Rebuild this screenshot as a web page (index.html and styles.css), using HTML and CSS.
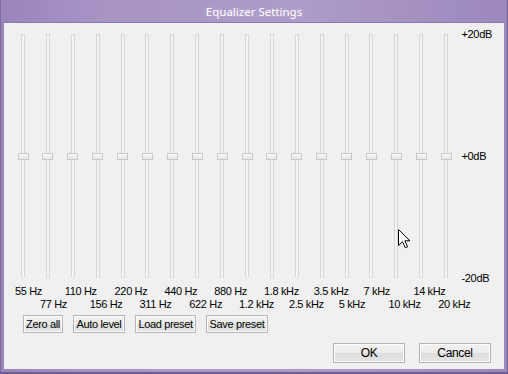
FILE: index.html
```html
<!DOCTYPE html>
<html lang="en">
  <head>
    <meta charset="UTF-8" />
    <title>Equalizer Settings</title>
    <link rel="stylesheet" href="styles.css">
  </head>
  <body>
    <div class="window">
      <div class="titlebar">Equalizer Settings</div>
      <div class="client">
        <div class="eq">
          <div class="bands">
            <div class="band"><span class="track"></span><span class="thumb"></span></div>
            <div class="band"><span class="track"></span><span class="thumb"></span></div>
            <div class="band"><span class="track"></span><span class="thumb"></span></div>
            <div class="band"><span class="track"></span><span class="thumb"></span></div>
            <div class="band"><span class="track"></span><span class="thumb"></span></div>
            <div class="band"><span class="track"></span><span class="thumb"></span></div>
            <div class="band"><span class="track"></span><span class="thumb"></span></div>
            <div class="band"><span class="track"></span><span class="thumb"></span></div>
            <div class="band"><span class="track"></span><span class="thumb"></span></div>
            <div class="band"><span class="track"></span><span class="thumb"></span></div>
            <div class="band"><span class="track"></span><span class="thumb"></span></div>
            <div class="band"><span class="track"></span><span class="thumb"></span></div>
            <div class="band"><span class="track"></span><span class="thumb"></span></div>
            <div class="band"><span class="track"></span><span class="thumb"></span></div>
            <div class="band"><span class="track"></span><span class="thumb"></span></div>
            <div class="band"><span class="track"></span><span class="thumb"></span></div>
            <div class="band"><span class="track"></span><span class="thumb"></span></div>
            <div class="band"><span class="track"></span><span class="thumb"></span></div>
          </div>
          <div class="db">
            <span>+20dB</span>
            <span>+0dB</span>
            <span>-20dB</span>
          </div>
        </div>
        <!-- labels alternate between two rows so they don't overlap -->
        <div class="freqs">
          <div class="freq-row">
            <span>55 Hz</span><span>110 Hz</span><span>220 Hz</span>
            <span>440 Hz</span><span>880 Hz</span><span>1.8 kHz</span>
            <span>3.5 kHz</span><span>7 kHz</span><span>14 kHz</span>
          </div>
          <div class="freq-row shifted">
            <span>77 Hz</span><span>156 Hz</span><span>311 Hz</span>
            <span>622 Hz</span><span>1.2 kHz</span><span>2.5 kHz</span>
            <span>5 kHz</span><span>10 kHz</span><span>20 kHz</span>
          </div>
        </div>
        <div class="presets">
          <button class="btn zero">Zero all</button>
          <button class="btn auto">Auto level</button>
          <button class="btn load">Load preset</button>
          <button class="btn save">Save preset</button>
        </div>
        <div class="actions">
          <button class="btn dlg">OK</button>
          <button class="btn dlg">Cancel</button>
        </div>
        <svg class="cursor" width="13" height="20" viewBox="0 0 13 20">
          <path d="M0.5 0.5 L0.5 16.5 L4.5 12.7 L7.3 18.8 L9.6 17.8 L6.9 11.8 L12 11.8 Z" fill="#fff" stroke="#000" stroke-width="1" stroke-linejoin="miter" />
        </svg>
      </div>
    </div>
  </body>
</html>
```

FILE: styles.css
```css
body {
  margin: 0;
  font-family: "Liberation Sans", Arial, sans-serif;
  background: #fff;
}
.window {
  width: 508px;
  height: 374px;
  box-sizing: border-box;
  padding: 0 4px 5px 4px;
  background: linear-gradient(90deg, #9a85ba 0%, #a794c5 20%, #ad9bca 60%, #9c88bb 100%);
  box-shadow: inset 0 -2px 0 #6d5c8f, inset 1px 0 0 #7d6aa0, inset -1px 0 0 #6f5e92;
}
.titlebar {
  height: 22px;
  line-height: 23px;
  text-align: center;
  color: #fff;
  font-family: "Noto Sans", sans-serif;
  font-size: 11.5px;
  text-shadow: 0 0 6px rgba(255, 255, 255, 0.35);
}
.client {
  position: relative;
  height: 347px;
  box-sizing: border-box;
  background: #f0f0f0;
  padding-top: 5px;
  font-size: 11px;
  letter-spacing: -0.35px;
  color: #000;
  border-top: 1px solid #8c79ad;
}
.eq {
  display: flex;
  height: 257px;
  padding-left: 6.5px;
}
.bands {
  display: flex;
  margin-top: 6px;
  height: 244px;
}
.band {
  position: relative;
  width: 24.9px;
  display: flex;
  justify-content: center;
}
.track {
  width: 4px;
  height: 100%;
  box-sizing: border-box;
  border: 1px solid #d6d6d6;
  border-bottom-color: #e2e2e2;
  background: #f4f4f4;
}
.thumb {
  position: absolute;
  top: 119px;
  left: 7px;
  width: 11px;
  height: 7px;
  box-sizing: border-box;
  border: 1px solid #c9c9c9;
  background: linear-gradient(#fafafa, #e6e6e6);
}
.db {
  display: flex;
  flex-direction: column;
  justify-content: space-between;
  margin-left: 3px;
  line-height: 13px;
}
.freqs {
  padding-left: 11px;
  line-height: 13px;
}
.freq-row {
  display: flex;
  white-space: nowrap;
}
.freq-row span {
  width: 49.8px;
  flex: none;
}
.freq-row.shifted {
  padding-left: 24.9px;
}
.btn {
  font-family: inherit;
  font-size: 11px;
  letter-spacing: -0.35px;
  color: #000;
  height: 18px;
  padding: 0;
  border: 1px solid #b5b5b5;
  border-radius: 0;
  background: linear-gradient(#f2f2f2 0%, #ebebeb 50%, #dddddd 51%, #e4e4e4 100%);
  box-shadow: inset 0 0 0 1px #fcfcfc;
}
.presets {
  display: flex;
  gap: 10px;
  padding-left: 19px;
  margin-top: 4px;
}
.zero { width: 40px; }
.auto { width: 52px; }
.load { width: 61px; }
.save { width: 62px; }
.actions {
  display: flex;
  justify-content: flex-end;
  gap: 14px;
  margin-top: 10px;
  padding-right: 13px;
}
.dlg {
  width: 72px;
  height: 20px;
  font-size: 12px;
}
.cursor {
  position: absolute;
  left: 394px;
  top: 206px;
}
```
